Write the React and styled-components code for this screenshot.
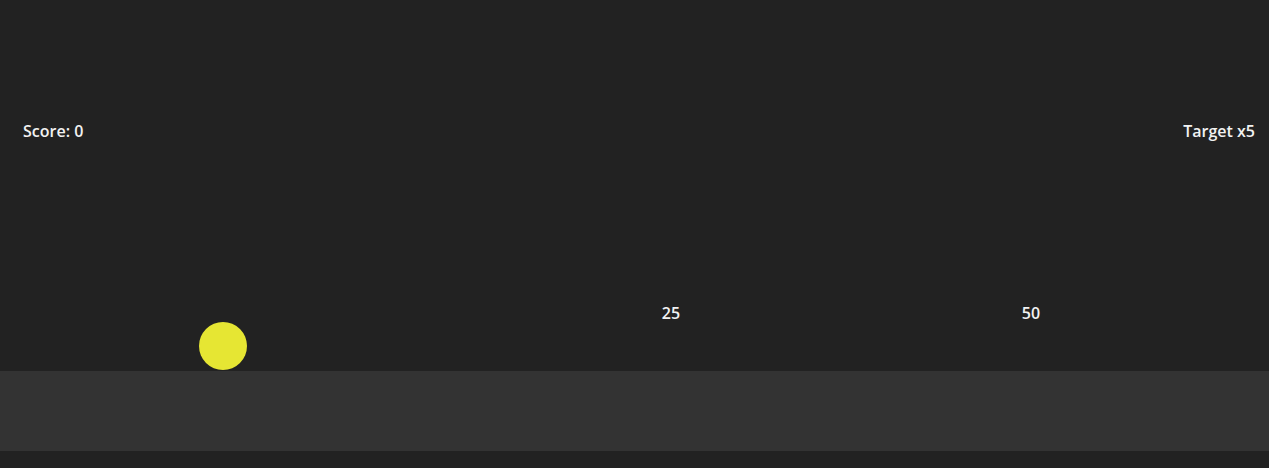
import React from "react";
import styled, { createGlobalStyle } from "styled-components";

const Global = createGlobalStyle`
  html, body {
    margin: 0;
    padding: 0;
    background: #222222;
  }
  body {
    font-family: "Open Sans", "Liberation Sans", sans-serif;
    color: #f2f2f2;
  }
`;

const Page = styled.div`
  height: 468px;
  background: #222222;
  display: flex;
  flex-direction: column;
`;

const Stage = styled.div`
  position: relative;
  height: 371px;
`;

const Hud = styled.div`
  display: flex;
  justify-content: space-between;
  padding: 120px 14px 0 23px;
  font-size: 16px;
  font-weight: 600;
  line-height: 22px;
`;

const Marker = styled.span`
  position: absolute;
  top: 302px;
  left: ${(p) => p.x}px;
  transform: translateX(-50%);
  font-size: 16px;
  font-weight: 600;
  line-height: 22px;
`;

const Ball = styled.div`
  position: absolute;
  left: ${(p) => p.x - 24}px;
  bottom: 1px;
  width: 48px;
  height: 48px;
  border-radius: 50%;
  background: #e6e633;
`;

const Ground = styled.div`
  height: 80px;
  background: #333333;
`;

const markers = [
  { label: "25", x: 671 },
  { label: "50", x: 1031 },
];

export default function App() {
  return (
    <Page>
      <Global />
      <Stage>
        <Hud>
          <span>Score: 0</span>
          <span>Target x5</span>
        </Hud>
        {markers.map((m) => (
          <Marker key={m.label} x={m.x}>
            {m.label}
          </Marker>
        ))}
        <Ball x={223} />
      </Stage>
      <Ground />
    </Page>
  );
}
